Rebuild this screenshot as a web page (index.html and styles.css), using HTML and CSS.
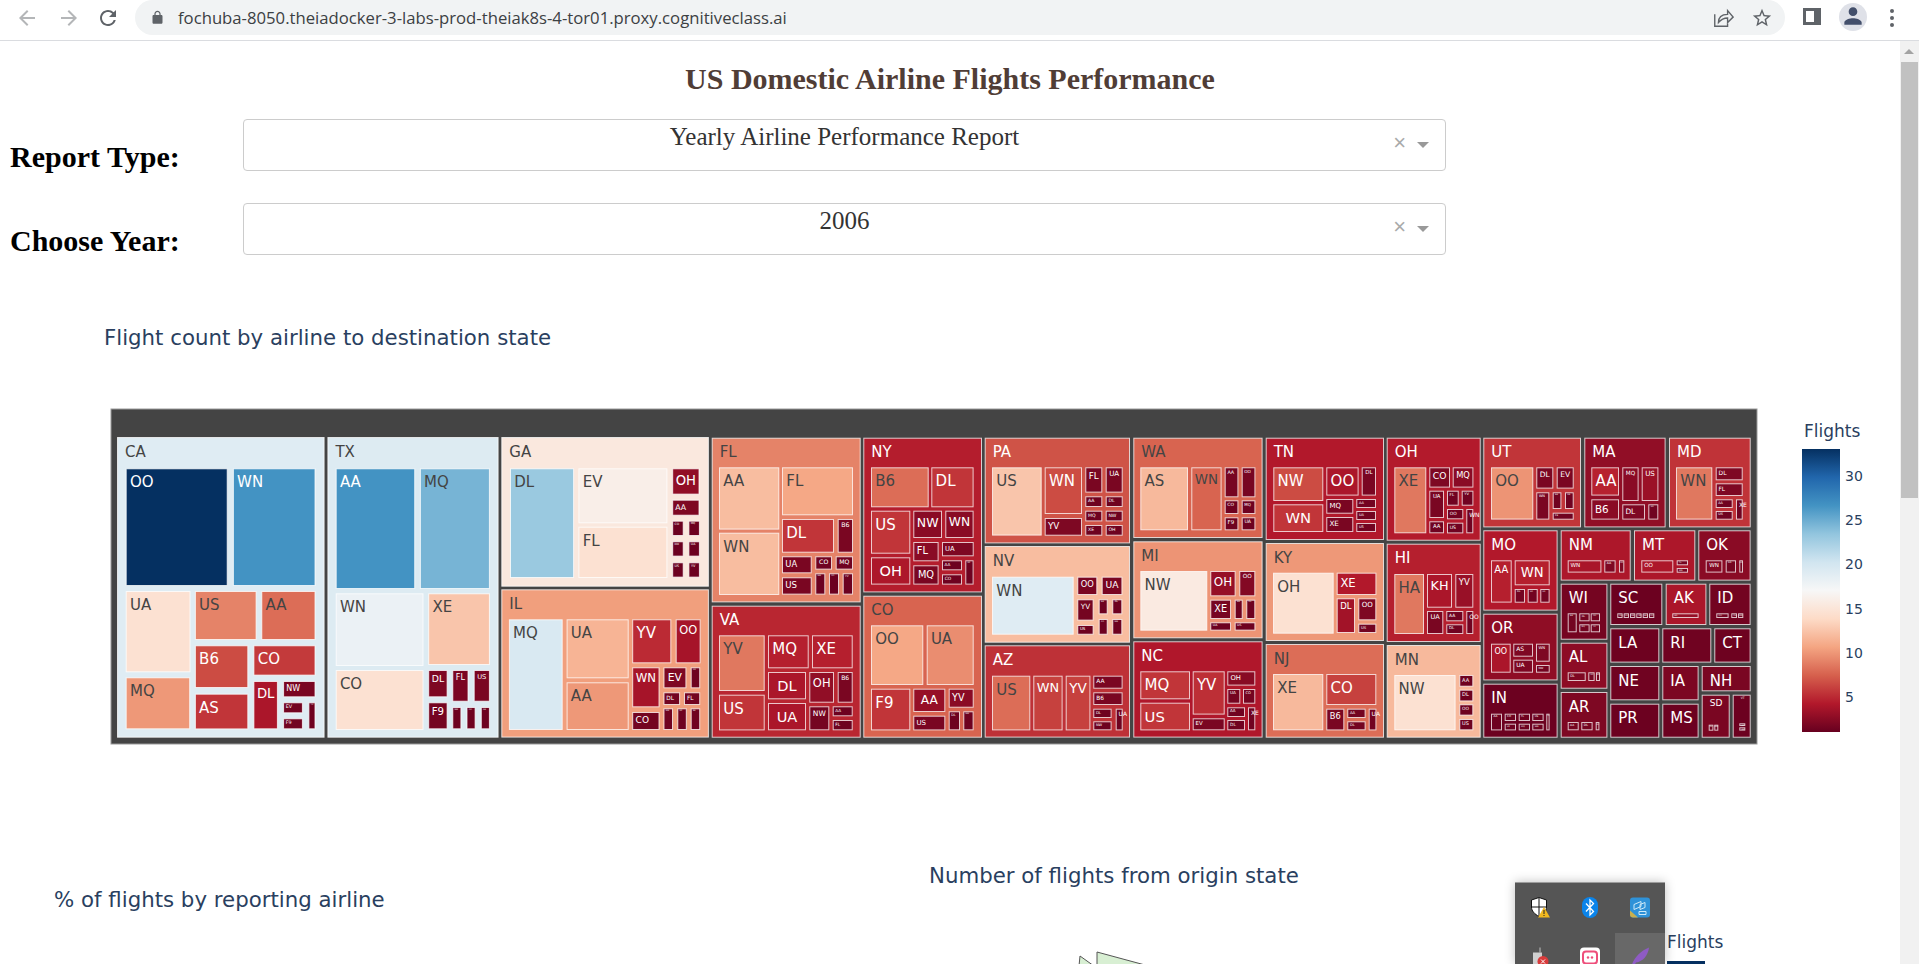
FILE: index.html
```html
<!DOCTYPE html>
<html lang="en">
<head>
    <meta charset="UTF-8">
    <title>US Domestic Airline Flights Performance</title>
    <link rel="stylesheet" href="styles.css">
</head>
<body>
    <header class="toolbar">
        <button class="nav-btn"><svg viewBox="0 0 24 24" class="icon-off"><path d="M20 11H7.83l5.59-5.59L12 4l-8 8 8 8 1.41-1.41L7.83 13H20v-2z"/></svg></button>
        <button class="nav-btn"><svg viewBox="0 0 24 24" class="icon-off"><path d="M12 4l-1.41 1.41L16.17 11H4v2h12.17l-5.58 5.59L12 20l8-8z"/></svg></button>
        <button class="nav-btn reload"><svg viewBox="0 0 24 24" class="icon-on"><path d="M17.65 6.35A7.958 7.958 0 0012 4c-4.42 0-7.99 3.58-7.99 8s3.57 8 7.99 8c3.73 0 6.84-2.55 7.73-6h-2.08A5.99 5.99 0 0112 18c-3.31 0-6-2.69-6-6s2.69-6 6-6c1.66 0 3.14.69 4.22 1.78L13 11h7V4l-2.35 2.35z"/></svg></button>
        <div class="omnibox">
            <svg viewBox="0 0 24 24" class="icon-on lock"><path d="M18 8h-1V6c0-2.76-2.24-5-5-5S7 3.24 7 6v2H6c-1.1 0-2 .9-2 2v10c0 1.1.9 2 2 2h12c1.1 0 2-.9 2-2V10c0-1.1-.9-2-2-2zM9 6c0-1.66 1.34-3 3-3s3 1.34 3 3v2H9V6z"/></svg>
            <span class="url">fochuba-8050.theiadocker-3-labs-prod-theiak8s-4-tor01.proxy.cognitiveclass.ai</span>
            <svg viewBox="0 0 24 24" class="share"><path d="M3 8v13h14v-3"/><path d="M7 17c0-6 4-9 10-9V4l6 7-6 6v-5c-4 0-7 1.500-10 5z"/></svg>
            <svg viewBox="0 0 24 24" class="icon-on star"><path d="M22 9.240l-7.190-.620L12 2 9.190 8.630 2 9.240l5.460 4.730L5.820 21 12 17.270 18.180 21l-1.630-7.030L22 9.240zM12 15.400l-3.760 2.270 1-4.280-3.320-2.880 4.380-.380L12 6.100l1.710 4.040 4.380.380-3.320 2.880 1 4.280L12 15.400z"/></svg>
        </div>
        <svg viewBox="0 0 18 17" class="icon-on side-panel"><path fill-rule="evenodd" d="M0 0h18v17H0zM3 3v11h8V3z"/></svg>
        <div class="avatar"><svg viewBox="0 0 24 24"><path d="M12 12c2.210 0 4-1.790 4-4s-1.790-4-4-4-4 1.790-4 4 1.790 4 4 4zm0 2c-2.670 0-8 1.340-8 4v2h16v-2c0-2.660-5.330-4-8-4z"/></svg></div>
        <div class="kebab"><i></i><i></i><i></i></div>
    </header>

    <div class="viewport">
        <main class="page">
            <h1 class="page-title">US Domestic Airline Flights Performance</h1>

            <div class="control-row">
                <label class="control-label">Report Type:</label>
                <div class="select-box">
                    <span class="select-value">Yearly Airline Performance Report</span>
                    <span class="select-icons"><span class="select-clear">×</span><span class="select-arrow"></span></span>
                </div>
            </div>
            <div class="control-row">
                <label class="control-label">Choose Year:</label>
                <div class="select-box">
                    <span class="select-value">2006</span>
                    <span class="select-icons"><span class="select-clear">×</span><span class="select-arrow"></span></span>
                </div>
            </div>

            <svg id="treemap" class="treemap" viewBox="0 320 1900 450">
                <defs>
                    <linearGradient id="rdbu" x1="0" y1="1" x2="0" y2="0">
                        <stop offset="0" stop-color="#67001f"/>
                        <stop offset=".1" stop-color="#b2182b"/>
                        <stop offset=".2" stop-color="#d6604d"/>
                        <stop offset=".3" stop-color="#f4a582"/>
                        <stop offset=".4" stop-color="#fddbc7"/>
                        <stop offset=".5" stop-color="#f7f7f7"/>
                        <stop offset=".6" stop-color="#d1e5f0"/>
                        <stop offset=".7" stop-color="#92c5de"/>
                        <stop offset=".8" stop-color="#4393c3"/>
                        <stop offset=".9" stop-color="#2166ac"/>
                        <stop offset="1" stop-color="#053061"/>
                    </linearGradient>
                </defs>
                <text class="graph-title" x="104" y="345">Flight count by airline to destination state</text>
                <rect class="treemap-root" x="111" y="409" width="1646" height="335"/>
                <g id="tiles"></g>
                <text class="bar-title" x="1804" y="437">Flights</text>
                <rect x="1802" y="449" width="38" height="283" fill="url(#rdbu)"/>
                <g class="bar-ticks">
                    <text x="1845" y="481">30</text>
                    <text x="1845" y="525">25</text>
                    <text x="1845" y="569">20</text>
                    <text x="1845" y="614">15</text>
                    <text x="1845" y="658">10</text>
                    <text x="1845" y="702">5</text>
                </g>
            </svg>

            <div class="graph-row">
                <svg class="pie-graph" viewBox="0 770 860 194">
                    <text class="graph-title" x="54" y="907">% of flights by reporting airline</text>
                </svg>
                <svg class="map-graph" viewBox="860 770 1040 194">
                    <text class="graph-title" x="929" y="883">Number of flights from origin state</text>
                    <path class="map-state" d="M1080 956L1094 966H1079z"/>
                    <path class="map-state" d="M1097 952L1145 965H1097z"/>
                    <text class="bar-title" x="1667" y="948">Flights</text>
                    <rect x="1667" y="961" width="38" height="3" fill="#053061"/>
                </svg>
            </div>
        </main>

        <div class="scrollbar">
            <div class="scroll-up"></div>
            <div class="scroll-thumb"></div>
        </div>
    </div>

    <div class="tray">
        <div class="tray-cell">
            <svg viewBox="0 0 20 20"><path d="M9 0l7.500 2.500v7c0 4-3 7-7.500 9.500C4.500 16.500 1.500 13.500 1.500 9.500v-7z" fill="#fff" stroke="#111"/><path d="M9 .5V19M1.500 9.500h15" stroke="#111" fill="none"/><path d="M14 9.500l6 10.500H8z" fill="#f2b91f"/><path d="M13.500 12.500h1v4h-1zM13.500 17.500h1v1h-1z" fill="#222"/></svg>
        </div>
        <div class="tray-cell">
            <svg viewBox="0 0 16 21"><rect width="16" height="21" rx="8" fill="#0b84ea"/><path d="M4 6.500l7.500 8-3.500 3.500V3l3.500 3.500-7.500 8" fill="none" stroke="#fff" stroke-width="1.300"/></svg>
        </div>
        <div class="tray-cell">
            <svg viewBox="0 0 20 20"><rect width="20" height="20" rx="3" fill="#2f92d8"/><path d="M0 13l8 7H3a3 3 0 01-3-3z" fill="#c9b04d"/><path d="M4 7l7-3v5l-7 3zM10 7l5-2v5l-5 2zM9 14h7v3H9z" fill="none" stroke="#cfeaf8"/></svg>
        </div>
        <div class="tray-cell">
            <svg viewBox="0 0 20 20"><path d="M9 0h2v5H9z" fill="#8b8b8b"/><path d="M3 5h9v15H3z" fill="#cfcfcf"/><circle cx="13" cy="14" r="5.500" fill="#d83b3b"/><path d="M11 12l4 4M15 12l-4 4" stroke="#fff"/></svg>
        </div>
        <div class="tray-cell">
            <svg viewBox="0 0 20 20"><rect width="20" height="20" rx="4" fill="#fff"/><rect x="3" y="4" width="14" height="12" rx="3" fill="none" stroke="#ee4f7b" stroke-width="2"/><circle cx="8" cy="10" r="1.200" fill="#ee4f7b"/><circle cx="12" cy="10" r="1.200" fill="#ee4f7b"/></svg>
        </div>
        <div class="tray-cell tray-hover">
            <svg viewBox="0 0 20 20"><path d="M1 20C3 12 9 4 19 0c-1 8-6 14-13 15l-3 5z" fill="#8e5bc4"/></svg>
        </div>
    </div>

    <script src="script.js"></script>
</body>
</html>
```

FILE: styles.css
```css
* {
    box-sizing: border-box;
}

html, body {
    margin: 0;
    height: 964px;
    overflow: hidden;
    background: #fff;
}

.toolbar {
    display: flex;
    height: 41px;
    padding-left: 6px;
    border-bottom: 1px solid #dadce0;
}

.nav-btn {
    width: 42px;
    height: 35px;
    padding: 0;
    border: none;
    background: none;
}

.nav-btn svg {
    display: block;
    width: 24px;
    height: 24px;
    margin: auto;
}

.nav-btn.reload {
    width: 36px;
}

.icon-off {
    fill: #b4b6b8;
}

.icon-on {
    fill: #5f6368;
}

.omnibox {
    display: flex;
    align-items: center;
    width: 1650px;
    height: 35px;
    margin-left: 9px;
    padding-left: 15px;
    background: #f1f3f4;
    border-radius: 18px;
}

.lock {
    width: 15px;
    height: 15px;
}

.url {
    margin-left: 13px;
    font-family: "Open Sans", sans-serif;
    font-size: 16.7px;
    color: #3c4043;
    flex: 1;
}

.share {
    width: 22px;
    height: 22px;
    fill: none;
    stroke: #5f6368;
    stroke-width: 1.5;
}

.star {
    width: 22px;
    height: 22px;
    margin: 0 12px 0 17px;
}

.side-panel {
    width: 18px;
    height: 17px;
    margin: 8px 0 0 18px;
}

.avatar {
    width: 28px;
    height: 28px;
    margin: 3px 0 0 18px;
    background: #dfe1e8;
    border-radius: 50%;
}

.avatar svg {
    display: block;
    width: 26px;
    height: 26px;
    margin: 0 1px;
    fill: #434f6b;
}

.kebab {
    display: flex;
    flex-direction: column;
    gap: 3px;
    margin: 9px 0 0 23px;
}

.kebab i {
    width: 4px;
    height: 4px;
    background: #5f6368;
    border-radius: 50%;
}

.viewport {
    display: flex;
    height: 923px;
}

.page {
    width: 1900px;
    flex: none;
}

.page-title {
    margin: 0;
    padding-top: 18px;
    height: 78px;
    font-family: "Liberation Serif", serif;
    font-size: 30px;
    line-height: 39px;
    font-weight: bold;
    text-align: center;
    color: #503d36;
}

.control-row {
    display: flex;
    height: 52px;
    margin-bottom: 32px;
    padding-left: 10px;
}

.control-label {
    width: 233px;
    flex: none;
    padding-top: 19px;
    font-family: "Liberation Serif", serif;
    font-size: 30px;
    line-height: 38px;
    font-weight: bold;
    color: #000;
}

.select-box {
    position: relative;
    width: 1203px;
    height: 52px;
    border: 1px solid #ccc;
    border-radius: 4px;
    text-align: center;
    font-family: "Liberation Serif", serif;
    font-size: 25px;
    line-height: 33px;
    color: #333;
}

.select-icons {
    position: absolute;
    right: 16px;
    top: 11px;
    display: flex;
    align-items: center;
    gap: 11px;
}

.select-clear {
    font-family: "Liberation Sans", sans-serif;
    font-size: 22px;
    line-height: 24px;
    color: #aaa;
}

.select-arrow {
    width: 0;
    height: 0;
    margin-top: 3px;
    border-top: 6px solid #999;
    border-left: 6px solid transparent;
    border-right: 6px solid transparent;
}

.treemap {
    display: block;
    width: 1900px;
    height: 450px;
    margin-top: 65px;
}

.treemap-root {
    fill: #444;
    stroke: #999;
    stroke-width: 1;
}

.tile {
    stroke: #fff;
    stroke-opacity: .75;
    stroke-width: 1;
}

.tile-label {
    font-family: "DejaVu Sans", sans-serif;
}

.label-dark {
    fill: #444;
}

.label-light {
    fill: #fff;
}

.graph-title {
    font-family: "DejaVu Sans", sans-serif;
    font-size: 21.3px;
    fill: #2a3f5f;
}

.bar-title {
    font-family: "DejaVu Sans", sans-serif;
    font-size: 17px;
    fill: #2a3f5f;
}

.bar-ticks text {
    font-family: "DejaVu Sans", sans-serif;
    font-size: 14px;
    fill: #2a3f5f;
}

.graph-row {
    display: flex;
}

.pie-graph {
    display: block;
    width: 860px;
    height: 194px;
    flex: none;
}

.map-graph {
    display: block;
    width: 1040px;
    height: 194px;
    flex: none;
}

.map-state {
    fill: #d8efd3;
    stroke: #555;
    stroke-width: 1;
}

.scrollbar {
    width: 19px;
    flex: none;
    background: #f1f1f1;
}

.scroll-up {
    height: 21px;
    position: relative;
}

.scroll-up::after {
    content: "";
    position: absolute;
    left: 4px;
    top: 8px;
    border-bottom: 5px solid #a3a3a3;
    border-left: 5px solid transparent;
    border-right: 5px solid transparent;
}

.scroll-thumb {
    width: 17px;
    height: 436px;
    margin-left: 1px;
    background: #c1c1c1;
}

.tray {
    position: absolute;
    left: 1515px;
    top: 882px;
    width: 150px;
    height: 82px;
    overflow: hidden;
    display: grid;
    grid-template-columns: repeat(3, 50px);
    grid-auto-rows: 50px;
    background: #555;
    border-top: 1px solid #9c9c9c;
    box-shadow: 0 0 10px rgba(0, 0, 0, 0.25);
}

.tray-cell {
    padding-top: 14px;
}

.tray-cell svg {
    display: block;
    width: 20px;
    height: 21px;
    margin: 0 auto;
}

.tray-hover {
    background: #686868;
}
```

FILE: script.js
```js
// Plotly's RdBu scale, low values red, high values blue
const STOPS = [
    [103, 0, 31], [178, 24, 43], [214, 96, 77], [244, 165, 130], [253, 219, 199], [247, 247, 247],
    [209, 229, 240], [146, 197, 222], [67, 147, 195], [33, 102, 172], [5, 48, 97]
];
const MIN = 1, MAX = 33;
const LABEL_SIZE = 15;

function colorOf(v) {
    const t = (v - MIN) / (MAX - MIN) * 10;
    const i = Math.min(Math.floor(t), 9);
    const f = t - i;
    const c = STOPS[i].map((s, k) => Math.round(s + (STOPS[i + 1][k] - s) * f));
    return 'rgb(' + c.join(',') + ')';
}

function labelClass(v) {
    return v < 7.2 || v > 26 ? 'label-light' : 'label-dark';
}

// rough glyph widths of the label font, in em
const GLYPHS = {
    A: .684, B: .686, C: .698, D: .77, E: .632, F: .575, H: .752, I: .295, K: .656, L: .557, M: .863, N: .748,
    O: .787, P: .603, Q: .787, R: .695, S: .635, T: .611, U: .732, V: .684, W: .989, X: .685, Y: .611
};

function emWidth(name) {
    return name.split('').reduce((sum, ch) => sum + (GLYPHS[ch] || .636), 0);
}

// Tile coordinates were read off 3x crops of the chart, so each block keeps its crop origin.
const CROPS = {
    a: { ox: 100, oy: 400, sx: 1568 / 620 },
    b: { ox: 700, oy: 420, sx: 3 },
    c: { ox: 1130, oy: 420, sx: 3 },
    d: { ox: 1470, oy: 420, sx: 3 }
};

function box(crop, x0, y0, x1, y1) {
    return {
        x: crop.ox + x0 / crop.sx,
        y: crop.oy + y0 / 3,
        w: (x1 - x0) / crop.sx,
        h: (y1 - y0) / 3
    };
}

// state: [crop, name, x0, y0, x1, y1, value, children, label size]
// child: [name, x0, y0, x1, y1, value, label size]
const STATES = [
    ['a', 'CA', 43, 111, 568, 1013, 19, [
        ['OO', 65, 205, 323, 558, 33], ['WN', 336, 205, 545, 558, 26.6], ['UA', 65, 573, 229, 817, 14.5],
        ['US', 240, 573, 396, 720, 9], ['AA', 408, 573, 545, 720, 8], ['B6', 240, 736, 375, 864, 6.5],
        ['CO', 388, 736, 545, 827, 5.7], ['DL', 388, 843, 450, 988, 3.9], ['NW', 463, 843, 545, 892, 1.8],
        ['EV', 463, 907, 513, 940, 1.5], ['F9', 463, 955, 513, 988, 1.5], ['YV', 527, 907, 545, 988, 1.3],
        ['MQ', 65, 832, 228, 988, 10], ['AS', 240, 881, 375, 988, 5.5]
    ]],
    ['a', 'TX', 575, 111, 1008, 1013, 19.2, [
        ['AA', 596, 205, 797, 567, 26.6], ['MQ', 809, 205, 986, 567, 24.5], ['WN', 596, 580, 818, 798, 18],
        ['XE', 830, 580, 986, 795, 12.5], ['CO', 596, 810, 818, 990, 14.5], ['DL', 830, 810, 879, 892, 2],
        ['FL', 891, 810, 932, 905, 1.8], ['US', 945, 810, 986, 905, 1.8], ['F9', 830, 907, 879, 988, 1.6],
        ['NW', 891, 921, 914, 988, 1.3], ['OO', 927, 921, 950, 988, 1.3], ['UA', 963, 921, 986, 988, 1.3]
    ]],
    ['a', 'GA', 1015, 111, 1540, 560, 15.3, [
        ['DL', 1037, 205, 1199, 534, 23], ['EV', 1210, 205, 1435, 370, 16], ['FL', 1210, 380, 1435, 534, 14.5],
        ['OH', 1447, 205, 1516, 284, 2.8], ['AA', 1447, 299, 1516, 347, 2], ['CO', 1447, 362, 1476, 408, 1.2],
        ['MQ', 1488, 362, 1517, 408, 1.2], ['OO', 1447, 424, 1476, 470, 1.2], ['UA', 1488, 424, 1517, 470, 1.2],
        ['US', 1447, 487, 1476, 533, 1.2], ['YV', 1488, 487, 1517, 533, 1.2]
    ]],
    ['a', 'IL', 1015, 568, 1540, 1013, 10.3, [
        ['MQ', 1034, 658, 1170, 990, 19.5], ['UA', 1180, 658, 1337, 835, 11.5], ['AA', 1180, 847, 1337, 990, 10],
        ['YV', 1346, 658, 1445, 790, 5], ['OO', 1456, 658, 1519, 790, 3.7], ['WN', 1346, 802, 1415, 922, 3.7],
        ['EV', 1425, 802, 1483, 865, 2], ['US', 1494, 802, 1518, 865, 1.3], ['DL', 1425, 877, 1467, 915, 1.5],
        ['FL', 1477, 877, 1518, 915, 1.5], ['CO', 1346, 936, 1415, 990, 1.5], ['NW', 1425, 925, 1449, 990, 1.4],
        ['XE', 1460, 925, 1484, 990, 1.4], ['B6', 1494, 925, 1518, 990, 1.4]
    ]],
    ['b', 'FL', 35, 53, 482, 547, 9, [
        ['AA', 57, 142, 238, 329, 12], ['FL', 246, 142, 459, 286, 10.8], ['WN', 57, 338, 238, 525, 12],
        ['DL', 246, 297, 402, 398, 5.5], ['B6', 413, 297, 459, 398, 1.8], ['UA', 246, 409, 335, 460, 1.8],
        ['CO', 346, 409, 396, 449, 1.4], ['MQ', 407, 409, 459, 449, 1.4], ['US', 246, 472, 335, 524, 1.8],
        ['NW', 346, 460, 376, 524, 1.2], ['OO', 387, 460, 417, 524, 1.2], ['YV', 428, 460, 459, 524, 1.2]
    ]],
    ['b', 'VA', 35, 557, 482, 953, 4.8, [
        ['YV', 57, 646, 194, 813, 8.5], ['US', 57, 824, 194, 931, 5.5], ['MQ', 204, 646, 326, 745, 4.5],
        ['XE', 336, 646, 458, 745, 4.5], ['DL', 204, 756, 318, 838, 3.9], ['OH', 328, 756, 402, 848, 2.8],
        ['B6', 413, 756, 458, 848, 1.8], ['UA', 204, 849, 318, 931, 3.9], ['NW', 328, 859, 388, 931, 1.6],
        ['AA', 398, 859, 458, 889, 1.3], ['FL', 398, 900, 458, 931, 1.3]
    ]],
    ['b', 'NY', 490, 53, 846, 517, 4.4, [
        ['B6', 513, 142, 686, 262, 8], ['DL', 694, 142, 821, 262, 5.5], ['US', 513, 272, 631, 401, 5.5],
        ['NW', 640, 272, 726, 354, 2.5], ['WN', 736, 272, 821, 354, 2.5], ['OH', 513, 412, 631, 494, 4],
        ['FL', 640, 366, 716, 424, 2.5], ['UA', 726, 366, 821, 409, 2], ['MQ', 640, 436, 716, 494, 1.8],
        ['AA', 726, 421, 786, 451, 1.3], ['CO', 726, 463, 786, 494, 1.3], ['XE', 796, 421, 821, 494, 1.3]
    ]],
    ['b', 'CO', 490, 527, 846, 953, 7.6, [
        ['OO', 513, 616, 670, 795, 10.8], ['UA', 680, 616, 821, 795, 9.5], ['F9', 513, 806, 631, 931, 5.5],
        ['AA', 640, 806, 736, 876, 3], ['YV', 746, 806, 821, 863, 2.5], ['US', 640, 887, 736, 931, 1.8],
        ['DL', 746, 874, 780, 931, 1.3], ['NW', 790, 874, 821, 931, 1.3]
    ]],
    ['b', 'PA', 854, 53, 1290, 370, 6.8, [
        ['US', 876, 142, 1025, 347, 12.5], ['WN', 1034, 142, 1146, 282, 6.5], ['YV', 1034, 294, 1146, 347, 2],
        ['FL', 1156, 142, 1207, 218, 1.8], ['UA', 1217, 142, 1268, 218, 1.8], ['AA', 1156, 229, 1207, 261, 1.3],
        ['DL', 1217, 229, 1268, 261, 1.3], ['MQ', 1156, 272, 1207, 304, 1.3], ['NW', 1217, 272, 1268, 304, 1.3],
        ['XE', 1156, 315, 1207, 347, 1.3], ['OH', 1217, 315, 1268, 347, 1.3]
    ]],
    ['b', 'NV', 854, 378, 1290, 668, 12, [
        ['WN', 876, 470, 1121, 644, 19], ['OO', 1132, 470, 1192, 525, 1.8], ['UA', 1205, 470, 1267, 525, 1.8],
        ['YV', 1132, 538, 1181, 602, 1.6], ['AA', 1196, 538, 1223, 583, 1.3], ['DL', 1237, 538, 1267, 583, 1.3],
        ['US', 1132, 615, 1181, 644, 1.3], ['CO', 1196, 597, 1223, 644, 1.3], ['NW', 1237, 597, 1267, 644, 1.3]
    ]],
    ['b', 'AZ', 854, 676, 1290, 953, 5.3, [
        ['US', 876, 767, 991, 931, 8], ['WN', 1000, 767, 1088, 931, 6], ['YV', 1097, 767, 1171, 931, 6],
        ['AA', 1180, 767, 1268, 806, 1.8], ['B6', 1180, 817, 1268, 855, 1.8], ['DL', 1180, 866, 1235, 894, 1.3],
        ['NW', 1180, 904, 1235, 931, 1.3], ['UA', 1247, 866, 1268, 931, 1.3, 6]
    ]],
    ['c', 'WA', 10, 53, 398, 354, 7.6, [
        ['AS', 31, 142, 174, 331, 11.8], ['WN', 184, 142, 275, 331, 7.6], ['AA', 284, 142, 325, 232, 1.7],
        ['OO', 335, 142, 376, 232, 1.7], ['CO', 284, 241, 325, 282, 1.3], ['MQ', 335, 241, 376, 282, 1.3],
        ['F9', 284, 292, 325, 331, 1.3], ['UA', 335, 292, 376, 331, 1.3]
    ]],
    ['c', 'MI', 10, 364, 398, 655, 9.8, [
        ['NW', 31, 453, 232, 632, 15.5], ['OH', 241, 453, 317, 529, 3], ['OO', 328, 453, 376, 529, 2.2],
        ['XE', 241, 539, 303, 597, 1.7], ['AA', 314, 539, 338, 597, 1.3], ['DL', 349, 539, 376, 597, 1.3],
        ['UA', 241, 607, 303, 632, 1.3], ['US', 314, 607, 376, 632, 1.3]
    ]],
    ['c', 'NC', 10, 664, 398, 953, 4.1, [
        ['MQ', 31, 754, 180, 838, 5.5], ['US', 31, 848, 180, 931, 5.5], ['YV', 188, 754, 284, 884, 5.2],
        ['OH', 292, 754, 376, 797, 2.4], ['UA', 292, 807, 331, 851, 1.6], ['CO', 339, 807, 376, 851, 1.6],
        ['AA', 292, 862, 345, 891, 1.4], ['DL', 292, 900, 345, 931, 1.4], ['EV', 188, 895, 284, 931, 1.8],
        ['XE', 354, 862, 376, 931, 1.4, 6]
    ]],
    ['c', 'TN', 407, 53, 762, 360, 4.2, [
        ['NW', 430, 142, 580, 243, 6.5], ['WN', 430, 253, 580, 336, 5.5], ['OO', 589, 142, 686, 227, 3.9],
        ['DL', 695, 142, 738, 227, 1.8], ['MQ', 589, 237, 670, 281, 1.8], ['XE', 589, 291, 670, 336, 1.8],
        ['AA', 679, 237, 738, 264, 1.5], ['UA', 679, 273, 738, 300, 1.5], ['US', 679, 309, 738, 336, 1.5]
    ]],
    ['c', 'KY', 407, 369, 762, 663, 10, [
        ['OH', 429, 458, 611, 641, 14.5], ['XE', 620, 458, 739, 525, 4.2], ['DL', 620, 535, 675, 639, 3.5],
        ['OO', 685, 535, 739, 601, 2], ['US', 685, 611, 739, 639, 1.5]
    ]],
    ['c', 'NJ', 407, 672, 762, 953, 8, [
        ['XE', 429, 762, 580, 931, 11.8], ['CO', 589, 762, 739, 855, 6], ['B6', 589, 866, 643, 931, 1.8],
        ['AA', 652, 866, 707, 894, 1.5], ['DL', 652, 904, 707, 931, 1.5], ['UA', 716, 866, 739, 931, 1.5, 6]
    ]],
    ['c', 'OH', 770, 53, 1052, 362, 4.3, [
        ['XE', 793, 142, 889, 340, 8.5], ['CO', 898, 142, 960, 203, 2], ['MQ', 968, 142, 1030, 203, 2.5],
        ['UA', 898, 212, 942, 294, 1.8], ['FL', 951, 212, 986, 257, 1.4], ['YV', 995, 212, 1030, 257, 1.4],
        ['OO', 951, 267, 1000, 298, 1.4], ['AA', 898, 304, 942, 340, 1.4], ['US', 951, 308, 1000, 340, 1.4],
        ['WN', 1009, 267, 1030, 340, 1.4, 6]
    ]],
    ['c', 'HI', 770, 371, 1052, 666, 4.5, [
        ['HA', 793, 462, 882, 642, 8.5], ['KH', 891, 462, 966, 563, 3.9], ['YV', 976, 462, 1030, 563, 3.1],
        ['UA', 891, 573, 940, 642, 1.8], ['AA', 949, 573, 1000, 604, 1.4], ['DL', 949, 613, 1000, 642, 1.4],
        ['OO', 1009, 573, 1030, 642, 1.4, 6]
    ]],
    ['c', 'MN', 770, 675, 1052, 953, 11.8, [
        ['NW', 793, 765, 977, 931, 14.5], ['AA', 988, 765, 1030, 800, 1.3], ['DL', 988, 809, 1030, 844, 1.3],
        ['OO', 988, 853, 1030, 887, 1.3], ['US', 988, 897, 1030, 931, 1.3]
    ]],
    ['d', 'UT', 40, 53, 333, 322, 5.5, [
        ['OO', 63, 142, 190, 299, 9.8], ['DL', 199, 142, 250, 206, 1.8], ['EV', 260, 142, 311, 206, 1.8],
        ['WN', 199, 217, 238, 299, 1.8], ['AA', 248, 217, 274, 267, 1.4], ['UA', 285, 217, 311, 267, 1.4],
        ['F9', 248, 278, 311, 299, 1.4]
    ]],
    ['d', 'MA', 343, 53, 587, 322, 2.8, [
        ['AA', 364, 142, 447, 227, 4.6], ['B6', 364, 238, 447, 299, 2.5], ['MQ', 457, 142, 506, 243, 2.5],
        ['US', 515, 142, 565, 243, 3.2], ['DL', 457, 253, 525, 299, 2], ['UA', 535, 253, 565, 299, 1.4]
    ]],
    ['d', 'MD', 597, 53, 842, 322, 5.4, [
        ['WN', 618, 142, 727, 299, 8.5], ['DL', 737, 142, 818, 181, 2], ['FL', 737, 190, 818, 228, 2],
        ['AA', 737, 238, 788, 264, 1.4], ['US', 737, 273, 788, 299, 1.4], ['XE', 798, 238, 818, 299, 1.4, 6]
    ]],
    ['d', 'MO', 40, 331, 263, 572, 4.2, [
        ['AA', 63, 421, 125, 548, 4.5], ['WN', 134, 421, 239, 496, 4.5], ['DL', 134, 507, 165, 548, 1.5],
        ['UA', 173, 507, 203, 548, 1.5], ['US', 211, 507, 239, 548, 1.5]
    ]],
    ['d', 'OR', 40, 581, 263, 781, 2.7, [
        ['OO', 63, 671, 122, 758, 3.9], ['AS', 130, 671, 189, 710, 2], ['WN', 198, 671, 239, 725, 2],
        ['UA', 130, 719, 189, 758, 2], ['NW', 198, 735, 239, 758, 1.5]
    ]],
    ['d', 'IN', 40, 791, 263, 953, 1.2, [
        ['AA', 63, 881, 96, 931, 1.3], ['CO', 104, 881, 138, 903, 1.3], ['FL', 146, 881, 180, 903, 1.3],
        ['US', 187, 881, 221, 903, 1.3], ['F9', 104, 911, 138, 931, 1.3], ['MQ', 146, 911, 180, 931, 1.3],
        ['WN', 187, 911, 221, 931, 1.3], ['YV', 229, 881, 239, 931, 1.3]
    ]],
    ['d', 'NM', 272, 331, 482, 482, 4, [
        ['WN', 293, 421, 394, 458, 3.8], ['AA', 403, 421, 437, 458, 2], ['US', 447, 421, 463, 458, 2]
    ]],
    ['d', 'MT', 492, 331, 676, 482, 4, [
        ['OO', 514, 421, 610, 458, 4], ['FL', 620, 421, 654, 436, 1.6], ['WN', 620, 444, 654, 458, 1.6]
    ]],
    ['d', 'OK', 685, 331, 842, 482, 2.5, [
        ['WN', 707, 421, 757, 458, 2.2], ['AA', 767, 421, 798, 458, 1.6], ['US', 808, 421, 819, 458, 1.6]
    ]],
    ['d', 'WI', 272, 491, 412, 659, 1.6, [
        ['AA', 293, 580, 320, 637, 1.5], ['DL', 328, 580, 359, 604, 1.5], ['OH', 362, 580, 390, 604, 1.5],
        ['MQ', 328, 613, 359, 637, 1.5], ['YV', 362, 613, 390, 637, 1.5]
    ]],
    ['d', 'AL', 272, 668, 412, 806, 2.6, [
        ['DL', 293, 757, 347, 783, 2], ['US', 355, 757, 374, 783, 1.6], ['XE', 378, 757, 390, 783, 1.6]
    ]],
    ['d', 'AR', 272, 816, 412, 953, 2, [
        ['AA', 293, 906, 326, 931, 1.6], ['DL', 334, 906, 368, 931, 1.6], ['US', 377, 906, 388, 931, 1.6]
    ]],
    ['d', 'SC', 421, 491, 577, 615, 1.2, [
        ['DL', 442, 580, 458, 594, 1.4], ['US', 461, 580, 477, 594, 1.4], ['UA', 480, 580, 496, 594, 1.4],
        ['XE', 499, 580, 515, 594, 1.4], ['AA', 518, 580, 534, 594, 1.4], ['OH', 537, 580, 553, 594, 1.4]
    ]],
    ['d', 'AK', 587, 491, 709, 615, 3.9, [
        ['AS', 607, 580, 686, 594, 3]
    ]],
    ['d', 'ID', 718, 491, 842, 615, 1.5, [
        ['OO', 739, 580, 776, 594, 1.5], ['DL', 784, 580, 801, 594, 1.5], ['WN', 804, 580, 820, 594, 1.5]
    ]],
    ['d', 'LA', 421, 625, 568, 728, 1.3, []],
    ['d', 'RI', 577, 625, 724, 728, 1.4, []],
    ['d', 'CT', 733, 625, 842, 728, 1.3, []],
    ['d', 'NE', 421, 738, 568, 841, 1.4, []],
    ['d', 'IA', 577, 738, 686, 841, 1.9, []],
    ['d', 'NH', 695, 738, 842, 814, 1.8, []],
    ['d', 'PR', 421, 851, 568, 953, 1.2, []],
    ['d', 'MS', 577, 851, 686, 953, 1.2, []],
    ['d', 'SD', 695, 824, 779, 953, 1.8, [
        ['DL', 716, 914, 730, 932, 1.5], ['NW', 733, 914, 745, 932, 1.5]
    ], 9],
    ['d', 'VT', 788, 824, 842, 953, 1.2, [
        ['US', 808, 910, 826, 918, 1.2], ['AA', 808, 922, 826, 932, 1.2]
    ], 3]
];

function rectTag(b, v) {
    return '<rect class="tile" x="' + (b.x + .5).toFixed(1) + '" y="' + (b.y + .5).toFixed(1) +
        '" width="' + (b.w - 1).toFixed(1) + '" height="' + (b.h - 1).toFixed(1) + '" fill="' + colorOf(v) + '"/>';
}

function textTag(name, x, y, size, v, anchor) {
    return '<text class="tile-label ' + labelClass(v) + '" x="' + x.toFixed(1) + '" y="' + y.toFixed(1) +
        '" font-size="' + size.toFixed(1) + '" text-anchor="' + anchor + '">' + name + '</text>';
}

function childTag(crop, c) {
    const b = box(crop, c[1], c[2], c[3], c[4]);
    const em = emWidth(c[0]);
    const fit = Math.min(LABEL_SIZE, (b.h - 3) * .6, (b.w - 7) / em);
    const size = c[6] || Math.max(fit, 2);
    const y = b.y + size * 1.27;
    if (!c[6] && size < LABEL_SIZE && size * em > b.w * .5) {
        return rectTag(b, c[5]) + textTag(c[0], b.x + b.w / 2, y, size, c[5], 'middle');
    }
    return rectTag(b, c[5]) + textTag(c[0], b.x + 2 + size * .15, y, size, c[5], 'start');
}

function stateTag(s) {
    const crop = CROPS[s[0]];
    const b = box(crop, s[2], s[3], s[4], s[5]);
    const size = s[8] || LABEL_SIZE;
    let out = rectTag(b, s[6]) + textTag(s[1], b.x + 8, b.y + size * 1.3, size, s[6], 'start');
    s[7].forEach(function(c) {
        out += childTag(crop, c);
    });
    return out;
}

document.getElementById('tiles').innerHTML = STATES.map(stateTag).join('');
```
